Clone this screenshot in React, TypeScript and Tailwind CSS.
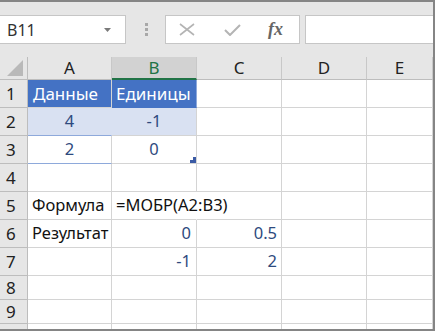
// @ts-nocheck
import React from 'react';

const FONT = "font-['Segoe_UI','Noto_Sans','Open_Sans',sans-serif]";
const NUM = 'text-[#2e4a7e]';

// widths: row header 28, A 84, B 85, C 85, D 85, E rest
const W = ['w-[28px]', 'w-[84px]', 'w-[85px]', 'w-[85px]', 'w-[85px]', 'flex-1'];

const Cell = ({ i, className = '', children = null }) => (
  <div className={`${W[i]} shrink-0 h-full flex items-center border-r border-b border-[#d4d4d4] whitespace-nowrap ${className}`}>
    {children}
  </div>
);

const RowHead = ({ n }) => (
  <div className="w-[28px] shrink-0 h-full flex items-center pl-[6px] bg-[#e6e6e6] border-r border-b border-[#bdbdbd] text-[17px] text-[#222]">
    {n}
  </div>
);

const Row = ({ n, h = 'h-[28px]', children }) => (
  <div className={`flex ${h}`}>
    <RowHead n={n} />
    {children}
  </div>
);

const Toolbar = () => (
  <div className="h-[55px] shrink-0 bg-[#e6e6e6] flex items-start pt-[13px]">
    <div className="w-[126px] h-[29px] bg-white border border-l-0 border-[#c6c6c6] flex items-center justify-between pl-[7px] pr-[14px]">
      <span className="text-[16px] text-[#333]">B11</span>
      <svg width="7" height="4" viewBox="0 0 7 4"><path d="M0 0h7L3.5 4z" fill="#7a7a7a" /></svg>
    </div>
    <div className="w-[39px] h-[29px] flex flex-col items-center justify-center gap-[2px] pl-[1px]">
      <span className="w-[3px] h-[3px] bg-[#a8a8a8]" />
      <span className="w-[3px] h-[3px] bg-[#a8a8a8]" />
      <span className="w-[3px] h-[3px] bg-[#a8a8a8]" />
    </div>
    <div className="w-[135px] h-[29px] bg-white border border-[#c6c6c6] flex items-center pl-[13px]">
      <svg width="16" height="13" viewBox="0 0 16 13" className="shrink-0">
        <path d="M1 1l14 11M15 1L1 12" stroke="#b4b4b4" strokeWidth="1.6" fill="none" />
      </svg>
      <svg width="17" height="12" viewBox="0 0 17 12" className="shrink-0 ml-[29px]">
        <path d="M1 6l5 5L16 1" stroke="#b4b4b4" strokeWidth="2" fill="none" />
      </svg>
      <span className="ml-[27px] font-['Liberation_Serif',serif] italic font-bold text-[18px] leading-none text-[#666] -mt-[2px]">fx</span>
    </div>
    <div className="ml-[5px] flex-1 h-[29px] bg-white border border-r-0 border-[#c6c6c6]" />
  </div>
);

const HeaderRow = () => (
  <div className="flex h-[23px] shrink-0 bg-[#e6e6e6] text-[17px] text-[#222]">
    <div className="w-[28px] shrink-0 h-full border-r border-b border-[#bdbdbd] flex items-end justify-end pr-[4px] pb-[3px]">
      <svg width="16" height="16" viewBox="0 0 16 16"><path d="M16 0V16H0z" fill="#b9b9b9" /></svg>
    </div>
    {['A', 'B', 'C', 'D', 'E'].map((c, k) => (
      <div
        key={c}
        className={`${W[k + 1]} shrink-0 h-full flex items-center justify-center border-r border-[#c8c8c8] ${
          c === 'B' ? 'bg-[#d2d2d2] border-b-2 border-b-[#217346] text-[#217346] pt-[1px]' : 'border-b border-b-[#bdbdbd]'
        }`}
      >
        {c}
      </div>
    ))}
  </div>
);

export default function App() {
  return (
    <div className={`w-[435px] h-[331px] flex flex-col overflow-hidden border-t-2 border-r-2 border-b-2 border-[#858585] bg-white ${FONT}`}>
      <Toolbar />
      <HeaderRow />
      <div className="flex flex-col text-[16.5px] text-[#111]">
        <Row n="1">
          <Cell i={1} className="bg-[#4472c4] border-[#4472c4] text-white text-[17px] pl-[5px]">Данные</Cell>
          <Cell i={2} className="bg-[#4472c4] border-b-[#4472c4] border-r-[#8ea9db] text-white text-[17px] pl-[4px]">Единицы</Cell>
          <Cell i={3} />
          <Cell i={4} />
          <Cell i={5} />
        </Row>
        <Row n="2">
          <Cell i={1} className={`bg-[#d9e1f2] border-r-[#d9e1f2] border-b-[#8ea9db] justify-center ${NUM}`}>4</Cell>
          <Cell i={2} className={`bg-[#d9e1f2] border-[#8ea9db] justify-center ${NUM}`}>-1</Cell>
          <Cell i={3} />
          <Cell i={4} />
          <Cell i={5} />
        </Row>
        <Row n="3">
          <Cell i={1} className={`border-b-[#8ea9db] justify-center ${NUM}`}>2</Cell>
          <Cell i={2} className={`relative border-[#8ea9db] justify-center ${NUM}`}>
            0
            <svg width="6" height="6" viewBox="0 0 6 6" className="absolute right-0 bottom-0">
              <path d="M0 6V3h3V0h3v6z" fill="#3b5ba5" />
            </svg>
          </Cell>
          <Cell i={3} />
          <Cell i={4} />
          <Cell i={5} />
        </Row>
        <Row n="4">
          <Cell i={1} />
          <Cell i={2} />
          <Cell i={3} />
          <Cell i={4} />
          <Cell i={5} />
        </Row>
        <Row n="5">
          <Cell i={1} className="pl-[4px]">Формула</Cell>
          <Cell i={2} className="pl-[4px] border-r-transparent overflow-visible">=МОБР(A2:B3)</Cell>
          <Cell i={3} />
          <Cell i={4} />
          <Cell i={5} />
        </Row>
        <Row n="6">
          <Cell i={1} className="pl-[4px]">Результат</Cell>
          <Cell i={2} className={`justify-end pr-[5px] ${NUM}`}>0</Cell>
          <Cell i={3} className={`justify-end pr-[4px] ${NUM}`}>0.5</Cell>
          <Cell i={4} />
          <Cell i={5} />
        </Row>
        <Row n="7">
          <Cell i={1} />
          <Cell i={2} className={`justify-end pr-[5px] ${NUM}`}>-1</Cell>
          <Cell i={3} className={`justify-end pr-[4px] ${NUM}`}>2</Cell>
          <Cell i={4} />
          <Cell i={5} />
        </Row>
        <Row n="8" h="h-[24px]">
          <Cell i={1} />
          <Cell i={2} />
          <Cell i={3} />
          <Cell i={4} />
          <Cell i={5} />
        </Row>
        <Row n="9" h="h-[24px]">
          <Cell i={1} />
          <Cell i={2} />
          <Cell i={3} />
          <Cell i={4} />
          <Cell i={5} />
        </Row>
        <Row n="" h="h-[24px]">
          <Cell i={1} />
          <Cell i={2} />
          <Cell i={3} />
          <Cell i={4} />
          <Cell i={5} />
        </Row>
      </div>
    </div>
  );
}
